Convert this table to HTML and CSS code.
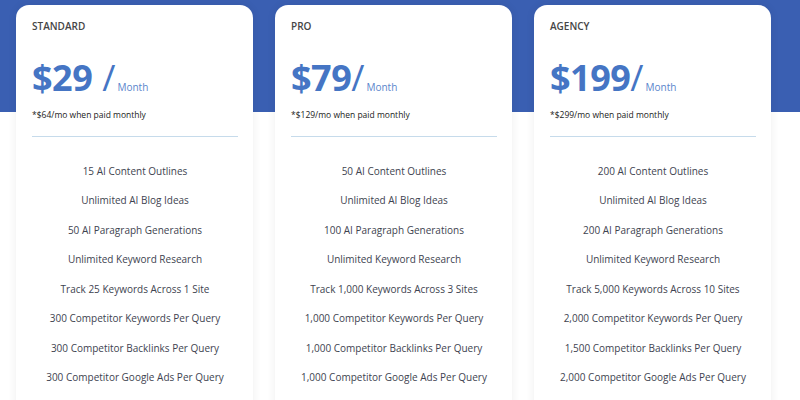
FILE: index.html
```html
<!DOCTYPE html>
<html lang="en">
<head>
    <meta charset="UTF-8">
    <meta name="viewport" content="width=device-width, initial-scale=1.0">
    <title>Pricing</title>
    <link rel="stylesheet" href="styles.css">
</head>
<body>
    <div class="pricing">
        <div class="plans">
            <div class="plan">
                <div class="plan-name">Standard</div>
                <div class="price">
                    <span class="amount">$29</span>
                    <span class="slash spaced">/</span>
                    <span class="period">Month</span>
                </div>
                <div class="note">*$64/mo when paid monthly</div>
                <ul class="features">
                    <li>15 AI Content Outlines</li>
                    <li>Unlimited AI Blog Ideas</li>
                    <li>50 AI Paragraph Generations</li>
                    <li>Unlimited Keyword Research</li>
                    <li>Track 25 Keywords Across 1 Site</li>
                    <li>300 Competitor Keywords Per Query</li>
                    <li>300 Competitor Backlinks Per Query</li>
                    <li>300 Competitor Google Ads Per Query</li>
                </ul>
            </div>

            <div class="plan">
                <div class="plan-name">Pro</div>
                <div class="price">
                    <span class="amount">$79</span>
                    <span class="slash">/</span>
                    <span class="period">Month</span>
                </div>
                <div class="note">*$129/mo when paid monthly</div>
                <ul class="features">
                    <li>50 AI Content Outlines</li>
                    <li>Unlimited AI Blog Ideas</li>
                    <li>100 AI Paragraph Generations</li>
                    <li>Unlimited Keyword Research</li>
                    <li>Track 1,000 Keywords Across 3 Sites</li>
                    <li>1,000 Competitor Keywords Per Query</li>
                    <li>1,000 Competitor Backlinks Per Query</li>
                    <li>1,000 Competitor Google Ads Per Query</li>
                </ul>
            </div>

            <div class="plan">
                <div class="plan-name">Agency</div>
                <div class="price">
                    <span class="amount">$199</span>
                    <span class="slash">/</span>
                    <span class="period">Month</span>
                </div>
                <div class="note">*$299/mo when paid monthly</div>
                <ul class="features">
                    <li>200 AI Content Outlines</li>
                    <li>Unlimited AI Blog Ideas</li>
                    <li>200 AI Paragraph Generations</li>
                    <li>Unlimited Keyword Research</li>
                    <li>Track 5,000 Keywords Across 10 Sites</li>
                    <li>2,000 Competitor Keywords Per Query</li>
                    <li>1,500 Competitor Backlinks Per Query</li>
                    <li>2,000 Competitor Google Ads Per Query</li>
                </ul>
            </div>
        </div>
    </div>
</body>
</html>
```

FILE: styles.css
```css
* {
    box-sizing: border-box;
    margin: 0;
    padding: 0;
    font-family: 'Open Sans', 'Noto Sans', sans-serif;
}

body {
    background-color: #fff;
    height: 400px;
    overflow: hidden;
}

.pricing {
    background: linear-gradient(to bottom, #3a5fb2 0, #3a5fb2 112px, #fff 112px);
    padding: 5px 0 0 16px;
    height: 400px;
    overflow: hidden;
}

.plans {
    display: flex;
    gap: 22px;
}

.plan {
    background-color: #fff;
    width: 237px;
    height: 420px;
    border-radius: 13px;
    padding: 15px 15px 0 16px;
    box-shadow: 0 0 10px rgba(0, 0, 0, 0.07);
}

.plan-name {
    font-size: 10px;
    line-height: 1;
    font-weight: 600;
    color: #454545;
    text-transform: uppercase;
    padding-top: 1px;
}

.price {
    display: flex;
    align-items: baseline;
    margin-top: 29px;
    color: #4575c4;
    line-height: 1;
}

.amount {
    font-size: 36px;
    font-weight: 700;
    letter-spacing: -0.5px;
}

.slash {
    font-size: 36px;
    font-weight: 400;
}

.slash.spaced {
    margin-left: 10px;
}

.period {
    font-size: 10px;
    color: #5a86cc;
    margin-left: 2px;
}

.note {
    margin-top: 15px;
    font-size: 8.5px;
    line-height: 1;
    color: #222;
}

.features {
    list-style: none;
    margin-top: 16px;
    border-top: 1px solid #c6dbeb;
    padding-top: 20px;
}

.features li {
    text-align: center;
    font-size: 10px;
    line-height: 29.5px;
    color: #3e4350;
}
```
